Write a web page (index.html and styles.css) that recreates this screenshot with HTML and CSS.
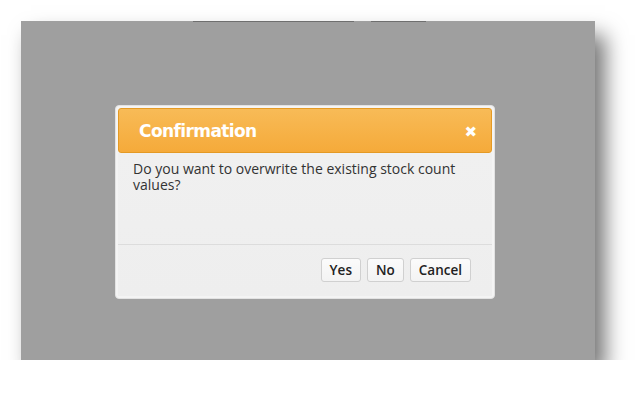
FILE: index.html
```html
<!DOCTYPE html>
<html lang="en">
<head>
	<meta charset="UTF-8">
	<title>Confirmation</title>
	<link rel="stylesheet" href="styles.css">
</head>
<body>
	<!-- 灰色遮罩 -->
	<div class="overlay">
		<div class="tabs">
			<span class="tab tabWide"></span>
			<span class="tab tabSmall"></span>
		</div>
		<!-- 确认弹窗 -->
		<div class="dialog">
			<div class="head">
				<span class="title">Confirmation</span>
				<span class="close">&#10006;</span>
			</div>
			<div class="body">
				<p class="msg">Do you want to overwrite the existing stock count values?</p>
				<div class="foot">
					<button class="btn">Yes</button>
					<button class="btn">No</button>
					<button class="btn">Cancel</button>
				</div>
			</div>
		</div>
	</div>
</body>
</html>
```

FILE: styles.css
```css
*{
	margin: 0;
	padding: 0;
	box-sizing: border-box;
}
body{
	background: #fff;
	font: normal 14px "Open Sans","DejaVu Sans",sans-serif;
}
/*灰色背景*/
.overlay{
	margin: 21px 0 0 21px;
	width: 574px;
	height: 339px;
	background: #9f9f9f;
	box-shadow: 10px 14px 20px rgba(0,0,0,.55);
	padding-left: 94px;
}
/*顶部残留的线*/
.tabs{
	display: flex;
	height: 84px;
	margin-left: 78px;
}
.tab{
	height: 1px;
	background: #6f6f6f;
}
.tabWide{
	width: 161px;
}
.tabSmall{
	width: 55px;
	margin-left: 17px;
}
/*弹窗*/
.dialog{
	width: 380px;
	height: 194px;
	background: #f4f4f4;
	border: 1px solid #e2e2e2;
	border-radius: 4px;
	padding: 2px;
	display: flex;
	flex-direction: column;
}
.head{
	height: 45px;
	border: 1px solid #e49a25;
	border-radius: 3px;
	background: linear-gradient(#f8bb57, #f5aa3a);
	display: flex;
	align-items: center;
	justify-content: space-between;
	padding: 1px 14px 0 20px;
	color: #fff;
}
.title{
	font: bold 17px "DejaVu Sans",sans-serif;
	letter-spacing: -0.6px;
}
.close{
	font-size: 15px;
	font-weight: bold;
}
.body{
	flex: 1;
	display: flex;
	flex-direction: column;
	background: linear-gradient(#f0f0f0, #eeeeee);
}
.msg{
	height: 92px;
	padding: 8px 15px 0 15px;
	color: #333;
	font-size: 14px;
	line-height: 16px;
	border-bottom: 1px solid #dcdcdc;
}
.foot{
	display: flex;
	justify-content: flex-end;
	gap: 6px;
	padding: 13px 21px 0 0;
}
.btn{
	height: 24px;
	padding: 0 8px;
	background: linear-gradient(#fbfbfb, #f3f3f3);
	border: 1px solid #d0d0d0;
	border-radius: 3px;
	color: #222;
	font: 600 13.5px "Open Sans","DejaVu Sans",sans-serif;
}
```
